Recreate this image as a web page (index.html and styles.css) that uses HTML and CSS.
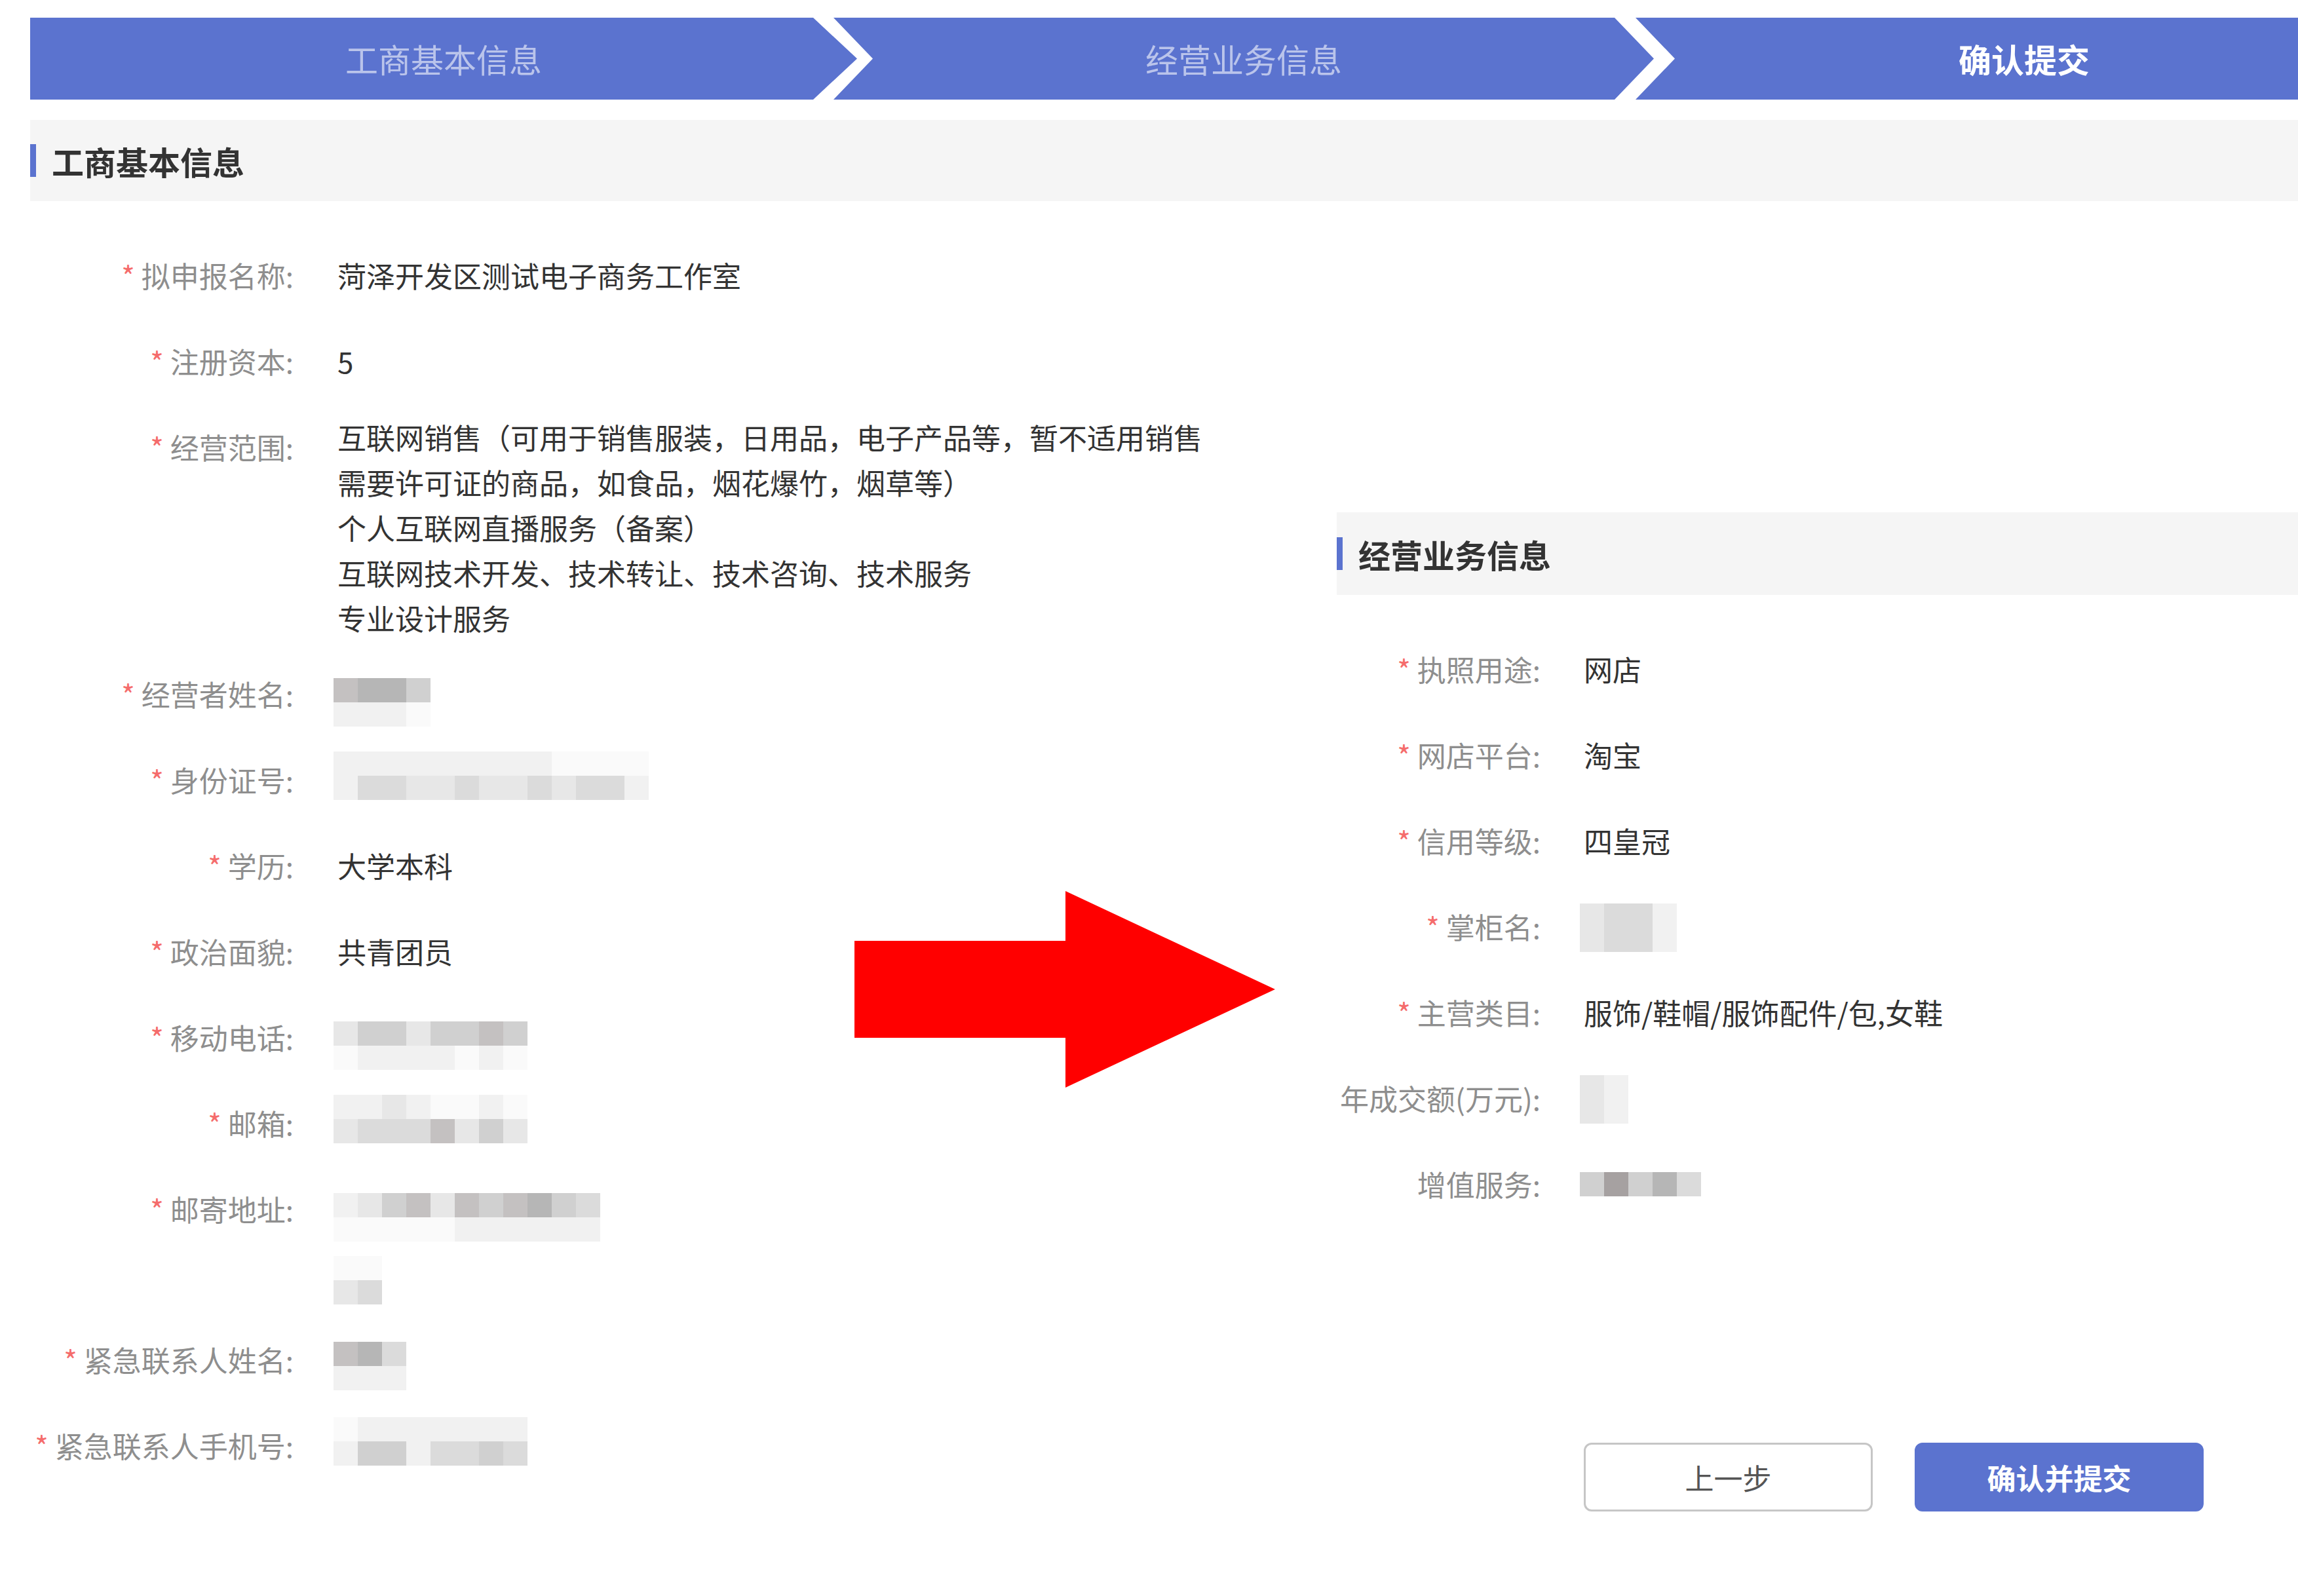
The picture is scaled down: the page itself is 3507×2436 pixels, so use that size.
FILE: index.html
```html
<!DOCTYPE html>
<html lang="zh-CN">
<head>
  <meta charset="UTF-8" />
  <meta name="viewport" content="width=device-width, initial-scale=1.0"/>
  <title>确认提交</title>
  <link rel="stylesheet" href="styles.css">
</head>
<body>

  <div class="page">
    <div class="steps">
      <div class="step step-first">工商基本信息</div>
      <div class="step">经营业务信息</div>
      <div class="step step-last active">确认提交</div>
    </div>

    <div class="section-title">工商基本信息</div>

    <div class="main">
      <!-- left: business info -->
      <div class="col-left">
        <div class="form-row">
          <div class="label"><span class="req">*</span>拟申报名称:</div>
          <div class="value">菏泽开发区测试电子商务工作室</div>
        </div>
        <div class="form-row">
          <div class="label"><span class="req">*</span>注册资本:</div>
          <div class="value">5</div>
        </div>
        <div class="form-row">
          <div class="label"><span class="req">*</span>经营范围:</div>
          <div class="value value-lines">
            <div>互联网销售（可用于销售服装，日用品，电子产品等，暂不适用销售</div>
            <div>需要许可证的商品，如食品，烟花爆竹，烟草等）</div>
            <div>个人互联网直播服务（备案）</div>
            <div>互联网技术开发、技术转让、技术咨询、技术服务</div>
            <div>专业设计服务</div>
          </div>
        </div>
        <div class="form-row">
          <div class="label"><span class="req">*</span>经营者姓名:</div>
          <div class="value">
            <div class="blur blur-lo">
              <i class="s5"></i><i class="s1"></i><i class="s6"></i><i class="s1"></i>
              <i class="s6"></i><i class="s1"></i><i class="s4"></i><i class="s0"></i>
            </div>
          </div>
        </div>
        <div class="form-row">
          <div class="label"><span class="req">*</span>身份证号:</div>
          <div class="value">
            <div class="blur blur-hi">
              <i class="s1"></i><i class="s1"></i><i class="s1"></i><i class="s3"></i>
              <i class="s1"></i><i class="s3"></i><i class="s1"></i><i class="s2"></i>
              <i class="s1"></i><i class="s2"></i><i class="s1"></i><i class="s3"></i>
              <i class="s1"></i><i class="s2"></i><i class="s1"></i><i class="s2"></i>
              <i class="s1"></i><i class="s3"></i><i class="s0"></i><i class="s2"></i>
              <i class="s0"></i><i class="s3"></i><i class="s0"></i><i class="s3"></i>
              <i class="s0"></i><i class="s1"></i>
            </div>
          </div>
        </div>
        <div class="form-row">
          <div class="label"><span class="req">*</span>学历:</div>
          <div class="value">大学本科</div>
        </div>
        <div class="form-row">
          <div class="label"><span class="req">*</span>政治面貌:</div>
          <div class="value">共青团员</div>
        </div>
        <div class="form-row">
          <div class="label"><span class="req">*</span>移动电话:</div>
          <div class="value">
            <div class="blur blur-lo">
              <i class="s2"></i><i class="s0"></i><i class="s4"></i><i class="s1"></i>
              <i class="s4"></i><i class="s1"></i><i class="s2"></i><i class="s1"></i>
              <i class="s4"></i><i class="s1"></i><i class="s4"></i><i class="s0"></i>
              <i class="s5"></i><i class="s1"></i><i class="s4"></i><i class="s0"></i>
            </div>
          </div>
        </div>
        <div class="form-row">
          <div class="label"><span class="req">*</span>邮箱:</div>
          <div class="value">
            <div class="blur blur-hi">
              <i class="s1"></i><i class="s2"></i><i class="s1"></i><i class="s3"></i>
              <i class="s2"></i><i class="s3"></i><i class="s1"></i><i class="s3"></i>
              <i class="s0"></i><i class="s5"></i><i class="s0"></i><i class="s2"></i>
              <i class="s1"></i><i class="s4"></i><i class="s0"></i><i class="s2"></i>
            </div>
          </div>
        </div>
        <div class="form-row">
          <div class="label"><span class="req">*</span>邮寄地址:</div>
          <div class="value">
            <div class="blur blur-lo">
              <i class="s1"></i><i class="s0"></i><i class="s2"></i><i class="s0"></i>
              <i class="s4"></i><i class="s0"></i><i class="s5"></i><i class="s0"></i>
              <i class="s2"></i><i class="s0"></i><i class="s5"></i><i class="s1"></i>
              <i class="s4"></i><i class="s1"></i><i class="s5"></i><i class="s1"></i>
              <i class="s6"></i><i class="s1"></i><i class="s4"></i><i class="s1"></i>
              <i class="s3"></i><i class="s1"></i>
            </div>
            <div class="blur">
              <i class="s0"></i><i class="s2"></i><i class="s0"></i><i class="s3"></i>
            </div>
          </div>
        </div>
        <div class="form-row">
          <div class="label"><span class="req">*</span>紧急联系人姓名:</div>
          <div class="value">
            <div class="blur">
              <i class="s5"></i><i class="s1"></i><i class="s6"></i><i class="s1"></i>
              <i class="s3"></i><i class="s1"></i>
            </div>
          </div>
        </div>
        <div class="form-row">
          <div class="label"><span class="req">*</span>紧急联系人手机号:</div>
          <div class="value">
            <div class="blur blur-hi">
              <i class="s0"></i><i class="s1"></i><i class="s1"></i><i class="s4"></i>
              <i class="s1"></i><i class="s4"></i><i class="s1"></i><i class="s1"></i>
              <i class="s1"></i><i class="s3"></i><i class="s1"></i><i class="s3"></i>
              <i class="s1"></i><i class="s4"></i><i class="s1"></i><i class="s3"></i>
            </div>
          </div>
        </div>
      </div>

      <!-- right: shop info -->
      <div class="col-right">
        <div class="section-title">经营业务信息</div>
        <div class="form-row">
          <div class="label"><span class="req">*</span>执照用途:</div>
          <div class="value">网店</div>
        </div>
        <div class="form-row">
          <div class="label"><span class="req">*</span>网店平台:</div>
          <div class="value">淘宝</div>
        </div>
        <div class="form-row">
          <div class="label"><span class="req">*</span>信用等级:</div>
          <div class="value">四皇冠</div>
        </div>
        <div class="form-row">
          <div class="label"><span class="req">*</span>掌柜名:</div>
          <div class="value">
            <div class="blur blur-mid">
              <i class="s2"></i><i class="s2"></i><i class="s3"></i><i class="s3"></i>
              <i class="s3"></i><i class="s3"></i><i class="s1"></i><i class="s1"></i>
            </div>
          </div>
        </div>
        <div class="form-row">
          <div class="label"><span class="req">*</span>主营类目:</div>
          <div class="value">服饰/鞋帽/服饰配件/包,女鞋</div>
        </div>
        <div class="form-row">
          <div class="label">年成交额(万元):</div>
          <div class="value">
            <div class="blur blur-mid">
              <i class="s2"></i><i class="s2"></i><i class="s1"></i><i class="s1"></i>
            </div>
          </div>
        </div>
        <div class="form-row">
          <div class="label">增值服务:</div>
          <div class="value">
            <div class="blur blur-single">
              <i class="s4"></i><i class="s7"></i><i class="s4"></i><i class="s6"></i><i class="s3"></i>
            </div>
          </div>
        </div>

        <div class="actions">
          <button class="btn btn-default">上一步</button>
          <button class="btn btn-primary">确认并提交</button>
        </div>
      </div>
    </div>
  </div>

  <!-- annotation arrow -->
  <svg class="arrow" width="642" height="300" viewBox="0 0 642 300">
    <polygon points="0,76 322,76 322,0 642,150 322,300 322,224 0,224" fill="#ff0000"/>
  </svg>

</body>
</html>
```

FILE: styles.css
```css
* {
  box-sizing: border-box;
}
body {
  font-family: "Noto Sans CJK SC", "Noto Sans", sans-serif;
  margin: 0;
  background-color: #fff;
  width: 3507px;
  overflow: hidden;
  position: relative;
}

.page {
  padding-left: 46px;
}

/* Step bar */
.steps {
  display: flex;
  margin-top: 27px;
  height: 125px;
  overflow: hidden;
}

.step {
  flex: none;
  width: 1252px;
  margin-left: -36px;
  background: #5b73cf;
  color: rgba(255,255,255,0.58);
  font-size: 50px;
  line-height: 125px;
  text-align: center;
  clip-path: polygon(0 0, calc(100% - 60px) 0, 100% 50%, calc(100% - 60px) 100%, 0 100%, 60px 50%);
}

.step-first {
  width: 1262px;
  margin-left: 0;
  clip-path: polygon(0 0, calc(100% - 67px) 0, 100% 50%, calc(100% - 67px) 100%, 0 100%);
}

.step-last {
  width: 1186px;
  margin-left: -28px;
}

.step.active {
  color: #fff;
  font-weight: bold;
}

/* Section header */
.section-title {
  display: flex;
  align-items: center;
  height: 124px;
  margin-top: 31px;
  background: #f5f5f5;
  color: #333;
  font-size: 49px;
  font-weight: bold;
}

.section-title::before {
  content: "";
  width: 9px;
  height: 50px;
  margin-right: 24px;
  background: #5b73cf;
}

.main {
  display: flex;
}

.col-left {
  flex: none;
  width: 1994px;
  padding-top: 64px;
}

.col-right {
  flex: 1;
  padding-top: 475px;
}

.col-right .section-title {
  margin-top: 0;
  height: 126px;
  margin-bottom: 64px;
}

/* Form rows */
.form-row {
  display: flex;
  align-items: flex-start;
  margin-bottom: 32px;
}

.label {
  flex: none;
  width: 402px;
  text-align: right;
  white-space: nowrap;
  color: #8e8e8e;
  font-size: 44px;
  line-height: 99px;
}

.col-right .label {
  width: 311px;
}

.req {
  color: #f56c6c;
  margin-right: 10px;
}

.value {
  padding-left: 67px;
  color: #333;
  font-size: 44px;
  line-height: 99px;
  white-space: nowrap;
}

.col-right .value {
  padding-left: 66px;
}

.value-lines {
  line-height: 69px;
}

/* mosaic blur of hidden values */
.blur {
  display: grid;
  grid-auto-flow: column;
  grid-template-rows: repeat(2, 37px);
  grid-auto-columns: 37px;
  margin: 22px 0 3px -6px;
}

.blur-hi { margin-top: 6px; margin-bottom: 19px; }
.blur-lo { margin-top: 25px; margin-bottom: 0; }
.blur-mid { margin-top: 14px; margin-bottom: 11px; }
.blur-single {
  grid-template-rows: 37px;
  margin-top: 31px;
  margin-bottom: 31px;
}

.s0 { background: #fafafa; }
.s1 { background: #f1f1f1; }
.s2 { background: #e7e7e7; }
.s3 { background: #dbdbdb; }
.s4 { background: #d0d0d0; }
.s5 { background: #c4c1c1; }
.s6 { background: #b6b6b6; }
.s7 { background: #a6a1a1; }

/* Buttons */
.actions {
  display: flex;
  gap: 64px;
  padding-left: 377px;
  margin-top: 345px;
}

.btn {
  width: 441px;
  height: 105px;
  border-radius: 12px;
  font-family: inherit;
  font-size: 44px;
  cursor: pointer;
}

.btn-default {
  background: #fff;
  border: 3px solid #c6c6c6;
  color: #555;
}

.btn-primary {
  background: #5b73cf;
  border: 3px solid #5b73cf;
  color: #fff;
  font-weight: bold;
}

.arrow {
  position: absolute;
  left: 1304px;
  top: 1360px;
}
```
